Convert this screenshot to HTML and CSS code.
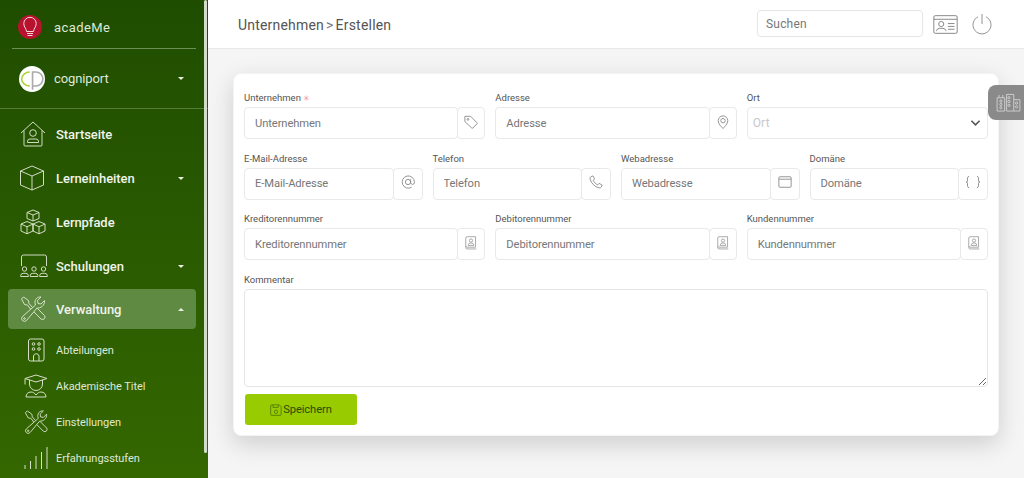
FILE: index.html
```html
<!DOCTYPE html>
<html lang="de">
<head>
<meta charset="utf-8">
<title>acadeMe</title>
<link rel="stylesheet" href="styles.css">
</head>
<body>
<svg class="defs" width="0" height="0" aria-hidden="true">
  <symbol id="i-tools" viewBox="0 0 26 26">
    <path d="M1.500 3 3.500 1 8.500 4.500 9 7.500 12.500 11.500M1.500 3 4.500 8.500 7.500 9 10.500 13"/>
    <path d="M17.500 12.500 24.500 19.500a2.500 2.500 0 0 1-3.500 3.500L14 16"/>
    <path d="M24.500 4.500 21 8 18 7.500 17.500 4.500 21 1C17.500.5 14.500 3.500 15 7L15.500 9 2.500 20.500a2.800 2.800 0 0 0 4 4L17 12C20.500 12.500 25 9.500 24.500 4.500Z"/>
    <circle cx="4.500" cy="22.500" r=".8"/>
  </symbol>
  <symbol id="i-contact" viewBox="0 0 18 20">
    <path d="M3.500 1h12v15h-12a2 2 0 0 1-2-2V3a2 2 0 0 1 2-2Z M1.500 14.500v2a2 2 0 0 0 2 2h13"/>
    <circle cx="9" cy="6.500" r="2.300"/>
    <path d="M5 13.500v-.8a3 3 0 0 1 3-2.500h2a3 3 0 0 1 3 2.500v.8Z"/>
  </symbol>
</svg>

<nav class="sidebar">
  <div class="brand">
    <svg class="logo" viewBox="0 0 24 24">
      <circle cx="12" cy="12" r="12" fill="#b8122f"/>
      <path class="logo-bulb" d="M8.500 16.500c0-3-2.700-4-2.700-8a6.200 6.200 0 0 1 12.400 0c0 4-2.700 5-2.700 8Z M9 18.500h6 M9.500 20.500h5"/>
    </svg>
    <span class="brand-name">acadeMe</span>
  </div>
  <div class="org">
    <svg class="logo logo-org" viewBox="0 0 24 24">
      <circle cx="12" cy="12" r="12" fill="#fff"/>
      <path class="logo-c" d="M10 5.500a7.500 6.500 0 0 0 0 13"/>
      <path class="logo-p" d="M12.500 22V5.500h3a6.500 6.500 0 0 1 0 13h-3"/>
    </svg>
    <span class="brand-name">cogniport</span>
    <i class="caret"></i>
  </div>
  <ul class="menu">
    <li class="item">
      <svg class="icon" viewBox="0 0 26 26"><path d="M1 12 13 1l12 11M4 9.500V24a1 1 0 0 0 1 1h16a1 1 0 0 0 1-1V9.500"/><circle cx="13" cy="12" r="3.300"/><path d="M7.500 21.500v-1.300a2.500 2.500 0 0 1 2.500-2.200h6a2.500 2.500 0 0 1 2.500 2.200v1.300Z"/></svg>
      <span>Startseite</span>
    </li>
    <li class="item">
      <svg class="icon" viewBox="1 0 26 26"><path d="M13 1 24.500 6v14L13 25 1.500 20V6ZM1.500 6 13 11 24.500 6M13 11v14"/></svg>
      <span>Lerneinheiten</span>
      <i class="caret"></i>
    </li>
    <li class="item">
      <svg class="icon" viewBox="0 0 26 26"><path d="M13 1l6 2.500v6L13 12 7 9.500v-6ZM7 3.500l6 2.500 6-2.500M13 6v6M7 12.500l6 2.500v7l-6 2.800L1 22v-7ZM1 15l6 2.800L13 15M7 17.800v7M19 12.500l6 2.500v7l-6 2.800L13 22v-7ZM13 15l6 2.800L25 15M19 17.800v7"/></svg>
      <span>Lernpfade</span>
    </li>
    <li class="item">
      <svg class="icon icon-wide" viewBox="0 0 28 24"><path d="M1.500 12V3a2 2 0 0 1 2-2h21a2 2 0 0 1 2 2v9"/><circle cx="4.500" cy="15" r="2.200"/><circle cx="14" cy="15" r="2.200"/><circle cx="23.500" cy="15" r="2.200"/><path d="M.7 22.500v-1a2.500 2.500 0 0 1 2.500-2.200h2.600a2.500 2.500 0 0 1 2.500 2.200v1ZM10.200 22.500v-1a2.500 2.500 0 0 1 2.500-2.200h2.600a2.500 2.500 0 0 1 2.500 2.200v1ZM19.700 22.500v-1a2.500 2.500 0 0 1 2.500-2.200h2.600a2.500 2.500 0 0 1 2.500 2.200v1Z"/></svg>
      <span>Schulungen</span>
      <i class="caret"></i>
    </li>
    <li class="item item-active">
      <svg class="icon"><use href="#i-tools"/></svg>
      <span>Verwaltung</span>
      <i class="caret caret-up"></i>
    </li>
    <li class="sub">
      <svg class="sub-icon" viewBox="0 0 24 24"><rect x="4.500" y="1" width="15.500" height="22" rx="2"/><circle cx="9.500" cy="6" r="1.300"/><circle cx="15" cy="6" r="1.300"/><circle cx="9.500" cy="11" r="1.300"/><circle cx="15" cy="11" r="1.300"/><path d="M9.500 23v-5a2.800 2.800 0 0 1 5.500 0v5"/></svg>
      <span>Abteilungen</span>
    </li>
    <li class="sub">
      <svg class="sub-icon" viewBox="0 0 24 24"><path d="M12 1 23 4.500 12 8 1 4.500ZM5.500 6v4a6.500 6.500 0 0 0 13 0V6M1 4.500v6M2 23c0-3 2-5 5-5 2 0 3.500 1 5 3 1.500-2 3-3 5-3 3 0 5 2 5 5Z"/></svg>
      <span>Akademische Titel</span>
    </li>
    <li class="sub">
      <svg class="sub-icon"><use href="#i-tools"/></svg>
      <span>Einstellungen</span>
    </li>
    <li class="sub">
      <svg class="sub-icon" viewBox="0 0 24 24"><path d="M1 23v-4M6.500 23v-8M12 23V10M17.500 23V6M23 23V1"/></svg>
      <span>Erfahrungsstufen</span>
    </li>
  </ul>
  <div class="thumb"></div>
</nav>

<div class="main">
  <header class="topbar">
    <div class="crumbs">Unternehmen<span class="crumb-sep">&gt;</span>Erstellen</div>
    <input class="search" type="text" placeholder="Suchen">
    <svg class="id-icon" viewBox="0 0 26 20"><rect x=".7" y=".7" width="24.600" height="18.600" rx="1.500"/><path d="M.7 4.500h24.600M15.500 9h7M15.500 12h7M15.500 15h7"/><circle cx="8.500" cy="9.500" r="2.700"/><path d="M3.500 17v-.5a3.500 3.500 0 0 1 3.500-2.500h3a3.500 3.500 0 0 1 3.500 2.500v.5"/></svg>
    <svg class="power-icon" viewBox="0 0 20 22"><path d="M10 1v10M6 3.800a9 9 0 1 0 8 0"/></svg>
  </header>

  <div class="content">
    <form class="card">
      <div class="row row-3">
        <div class="field">
          <label class="label">Unternehmen <span class="req">✳</span></label>
          <div class="group">
            <input class="input" type="text" placeholder="Unternehmen">
            <span class="addon"><svg class="addon-icon" viewBox="0 0 16 16"><path d="M1 1.500h6.500l7.300 7.300a1 1 0 0 1 0 1.400l-4.600 4.600a1 1 0 0 1-1.400 0L1 7.500Z"/><circle cx="4.500" cy="5" r="1"/></svg></span>
          </div>
        </div>
        <div class="field">
          <label class="label">Adresse</label>
          <div class="group">
            <input class="input" type="text" placeholder="Adresse">
            <span class="addon"><svg class="addon-icon" viewBox="0 0 16 16"><path d="M8 15.500c-1.500-2-5.500-5-5.500-9a5.500 5.500 0 0 1 11 0c0 4-4 7-5.500 9Z"/><circle cx="8" cy="6.500" r="2.500"/></svg></span>
          </div>
        </div>
        <div class="field">
          <label class="label">Ort</label>
          <div class="select">
            <span>Ort</span>
            <svg class="chevron" viewBox="0 0 12 8"><path d="M1.500 1.500 6 6l4.500-4.500"/></svg>
          </div>
        </div>
      </div>

      <div class="row row-4">
        <div class="field">
          <label class="label">E-Mail-Adresse</label>
          <div class="group">
            <input class="input" type="text" placeholder="E-Mail-Adresse">
            <span class="addon addon-wide"><svg class="addon-icon" viewBox="0 0 16 16"><circle cx="8" cy="8" r="3"/><path d="M11 5v4a2.200 2.200 0 0 0 4.300 0V8a7 7 0 1 0-3 5.800"/></svg></span>
          </div>
        </div>
        <div class="field">
          <label class="label">Telefon</label>
          <div class="group">
            <input class="input" type="text" placeholder="Telefon">
            <span class="addon addon-wide"><svg class="addon-icon" viewBox="0 0 16 16"><path d="M4.500 1 2 2c-.8.500-1 1.500-.8 2.500C2.500 9.500 6.500 13.500 11.500 14.800c1 .2 2-.2 2.500-1l1-2.300-3.500-2-1.500 1.800C8 10.500 5.500 8 4.700 6l1.800-1.500Z"/></svg></span>
          </div>
        </div>
        <div class="field">
          <label class="label">Webadresse</label>
          <div class="group">
            <input class="input" type="text" placeholder="Webadresse">
            <span class="addon addon-wide"><svg class="addon-icon" viewBox="0 0 16 16"><rect x="1" y="2" width="14" height="12" rx="1"/><path d="M1 4.800h14"/></svg></span>
          </div>
        </div>
        <div class="field">
          <label class="label">Domäne</label>
          <div class="group">
            <input class="input" type="text" placeholder="Domäne">
            <span class="addon addon-wide"><svg class="addon-icon addon-icon-wide" viewBox="0 0 16 12"><path d="M4 .5C2.500.5 2.500 1.500 2.500 2.500v2c0 1-.5 1.500-1.500 1.500 1 0 1.500.5 1.500 1.500v2c0 1 0 2 1.500 2M12 .5c1.500 0 1.500 1 1.500 2v2c0 1 .5 1.500 1.500 1.500-1 0-1.500.5-1.500 1.500v2c0 1 0 2-1.500 2"/></svg></span>
          </div>
        </div>
      </div>

      <div class="row row-3">
        <div class="field">
          <label class="label">Kreditorennummer</label>
          <div class="group">
            <input class="input" type="text" placeholder="Kreditorennummer">
            <span class="addon"><svg class="addon-icon"><use href="#i-contact"/></svg></span>
          </div>
        </div>
        <div class="field">
          <label class="label">Debitorennummer</label>
          <div class="group">
            <input class="input" type="text" placeholder="Debitorennummer">
            <span class="addon"><svg class="addon-icon"><use href="#i-contact"/></svg></span>
          </div>
        </div>
        <div class="field">
          <label class="label">Kundennummer</label>
          <div class="group">
            <input class="input" type="text" placeholder="Kundennummer">
            <span class="addon"><svg class="addon-icon"><use href="#i-contact"/></svg></span>
          </div>
        </div>
      </div>

      <div class="field">
        <label class="label">Kommentar</label>
        <textarea class="textarea"></textarea>
      </div>

      <button class="save" type="button">
        <svg class="save-icon" viewBox="0 0 14 14"><path d="M1.800 1h9l2.200 2.200v9a1 1 0 0 1-1 1H1.800a1 1 0 0 1-1-1V2a1 1 0 0 1 1-1Z"/><path d="M3.500 1v3h6V1"/><circle cx="7" cy="9" r="2"/></svg>
        <span>Speichern</span>
      </button>
    </form>
  </div>
  <div class="side-tab">
    <svg viewBox="0 0 26 20"><path d="M1 19V5h8v14ZM3 5V2M7 5V2M11 19V1.500h7.500V19ZM18.500 7H25v12h-6.500"/><circle cx="5" cy="8.500" r="1.200"/><circle cx="5" cy="12" r="1.200"/><circle cx="5" cy="15.500" r="1.200"/><circle cx="13.500" cy="5" r="1.200"/><circle cx="13.500" cy="9" r="1.200"/><circle cx="13.500" cy="13" r="1.200"/><circle cx="21.500" cy="10.500" r="1.200"/><circle cx="21.500" cy="14.500" r="1.200"/></svg>
  </div>
</div>
</body>
</html>
```

FILE: styles.css
```css
* { box-sizing: border-box; }

html, body {
  margin: 0;
  height: 478px;
  overflow: hidden;
}

body {
  display: flex;
  font-family: Roboto, "Liberation Sans", sans-serif;
  color: #555;
  background: #f5f5f5;
}

.defs { position: absolute; }

/* Sidebar */
.sidebar {
  position: relative;
  flex: 0 0 208px;
  height: 478px;
  overflow: hidden;
  background: linear-gradient(180deg, #1f4d00 0%, #346700 100%);
  color: #fff;
}

.thumb {
  position: absolute;
  top: 0;
  left: 204px;
  width: 3px;
  height: 453px;
  background: #d3dccb;
  border-radius: 2px;
}

.brand,
.org {
  display: flex;
  align-items: center;
  color: #dfe8d8;
}

.brand {
  height: 49px;
  gap: 12px;
  margin: 0 12px;
  padding: 6px 0 0 6px;
  border-bottom: 1px solid #6c8f55;
}

.org {
  height: 60px;
  gap: 9px;
  padding: 0 24px 0 19px;
  border-bottom: 1px solid #567c3e;
}

.logo {
  width: 24px;
  height: 24px;
  flex: none;
  fill: none;
}

.logo-org {
  width: 26px;
  height: 26px;
}

.logo-bulb {
  stroke: #f3d9dd;
  stroke-width: 1;
}

.logo-c {
  stroke: #b4d43c;
  stroke-width: 1.500;
}

.logo-p {
  stroke: #aaa;
  stroke-width: 1.500;
}

.brand-name {
  flex: 1;
  font-size: 13px;
  letter-spacing: .4px;
}

.org .brand-name { letter-spacing: -.1px; }

.caret {
  width: 0;
  height: 0;
  margin-left: auto;
  border-left: 3.500px solid transparent;
  border-right: 3.500px solid transparent;
  border-top: 3.500px solid #e8eee2;
}

.caret-up {
  border-top: 0;
  border-bottom: 3.500px solid #e8eee2;
}

.menu {
  margin: 3px 0 0;
  padding: 0;
  list-style: none;
}

.item {
  display: flex;
  align-items: center;
  height: 44px;
  padding: 0 24px 0 20px;
  gap: 10px;
  font-size: 13px;
  font-weight: 500;
  letter-spacing: -.05px;
  color: #f0f4ec;
}

.item-active {
  height: 40px;
  margin: 1px 12px 3px 8px;
  padding: 0 12px;
  background: #5f8a42;
  border-radius: 4px;
}

.icon {
  width: 26px;
  height: 26px;
  flex: none;
  fill: none;
  stroke: #e3ead9;
  stroke-width: .9;
}

.icon-wide {
  width: 28px;
  margin-right: -2px;
}

.sub {
  display: flex;
  align-items: center;
  height: 36px;
  padding-left: 24px;
  gap: 8px;
  font-size: 11px;
  letter-spacing: -.05px;
  color: #dfe8d8;
}

.sub-icon {
  width: 24px;
  height: 24px;
  flex: none;
  fill: none;
  stroke: #d5dfc9;
  stroke-width: 1;
}

/* Main */
.main {
  flex: 1;
  min-width: 0;
  display: flex;
  flex-direction: column;
  position: relative;
}

.topbar {
  display: flex;
  align-items: center;
  height: 49px;
  padding: 0 32px 2px 30px;
  background: #fff;
  border-bottom: 1px solid #e8e8e8;
}

.crumbs {
  flex: 1;
  padding-top: 4px;
  font-size: 14px;
  color: #555;
  letter-spacing: .2px;
}

.crumb-sep {
  margin: 0 2px;
  color: #777;
}

.search {
  width: 166px;
  height: 27px;
  padding: 2px 8px 0;
  border: 1px solid #e6e6e6;
  border-radius: 4px;
  font: 12px Roboto, "Liberation Sans", sans-serif;
  letter-spacing: .2px;
  background: #fff;
}

.search::placeholder { color: #777; opacity: 1; }

.id-icon {
  width: 25px;
  height: 19px;
  margin: 2px 0 0 10px;
  fill: none;
  stroke: #777;
  stroke-width: .9;
}

.power-icon {
  width: 20px;
  height: 22px;
  margin: 2px 0 0 14px;
  fill: none;
  stroke: #888;
  stroke-width: .9;
}

.content {
  flex: 1;
  padding: 24px 25px 0;
}

.card {
  height: 363px;
  padding: 19px 10px 0;
  background: #fff;
  border: 1px solid #f4f4f4;
  border-radius: 8px;
  box-shadow: 0 8px 24px rgba(0, 0, 0, .16);
}

.row {
  display: grid;
  gap: 10px;
  margin-bottom: 14.500px;
}

.row-3 { grid-template-columns: repeat(3, 1fr); }
.row-4 { grid-template-columns: repeat(4, 1fr); }

.field {
  display: flex;
  flex-direction: column;
  min-width: 0;
}

.label {
  height: 14px;
  line-height: 10px;
  font-size: 9.500px;
  color: #555;
}

.req {
  font-size: 8px;
  color: #f58f8f;
}

.group {
  display: flex;
  height: 32px;
}

.input {
  flex: 1;
  min-width: 0;
  padding: 0 10px;
  border: 1px solid #e9e9e9;
  border-radius: 4px;
  background: #fff;
  font: 11.200px Roboto, "Liberation Sans", sans-serif;
  letter-spacing: -.1px;
  color: #555;
}

.input::placeholder { color: #777; opacity: 1; }

.addon {
  flex: 0 0 28px;
  display: flex;
  align-items: center;
  justify-content: center;
  margin-left: -1px;
  border: 1px solid #e9e9e9;
  border-radius: 4px;
  background: #fff;
}

.addon-wide { flex-basis: 30px; }

.addon-icon {
  width: 14px;
  height: 14px;
  margin-bottom: 3px;
  fill: none;
  stroke: #888;
  stroke-width: 1;
}

.addon-icon-wide {
  width: 16px;
  height: 12px;
}

.select {
  display: flex;
  align-items: center;
  justify-content: space-between;
  height: 32px;
  padding: 0 6px 0 5px;
  border: 1px solid #e9e9e9;
  border-radius: 4px;
  font-size: 12px;
  letter-spacing: .2px;
  color: #c8c8c8;
}

.chevron {
  width: 11px;
  height: 8px;
  fill: none;
  stroke: #555;
  stroke-width: 1.700;
}

.textarea {
  display: block;
  width: 100%;
  height: 98.500px;
  border: 1px solid #e5e5e5;
  border-radius: 4px;
  background: #fff;
  resize: vertical;
}

.save {
  display: flex;
  align-items: center;
  justify-content: center;
  gap: 1px;
  width: 112px;
  height: 31px;
  margin: 7px 0 0 1px;
  padding: 0;
  border: 0;
  border-radius: 3px;
  background: #99cc00;
  font: 11.200px Roboto, "Liberation Sans", sans-serif;
  letter-spacing: -.1px;
  color: #2c4c00;
}

.save-icon {
  width: 12px;
  height: 12px;
  fill: none;
  stroke: #4f7a00;
  stroke-width: 1;
}

.side-tab {
  position: absolute;
  top: 85px;
  right: 0;
  width: 36px;
  height: 35px;
  display: flex;
  align-items: center;
  justify-content: center;
  padding-left: 4px;
  background: #8a8a8a;
  border-radius: 8px 0 0 8px;
}

.side-tab svg {
  width: 25px;
  height: 19px;
  fill: none;
  stroke: #cfcfcf;
  stroke-width: 1;
}
```
